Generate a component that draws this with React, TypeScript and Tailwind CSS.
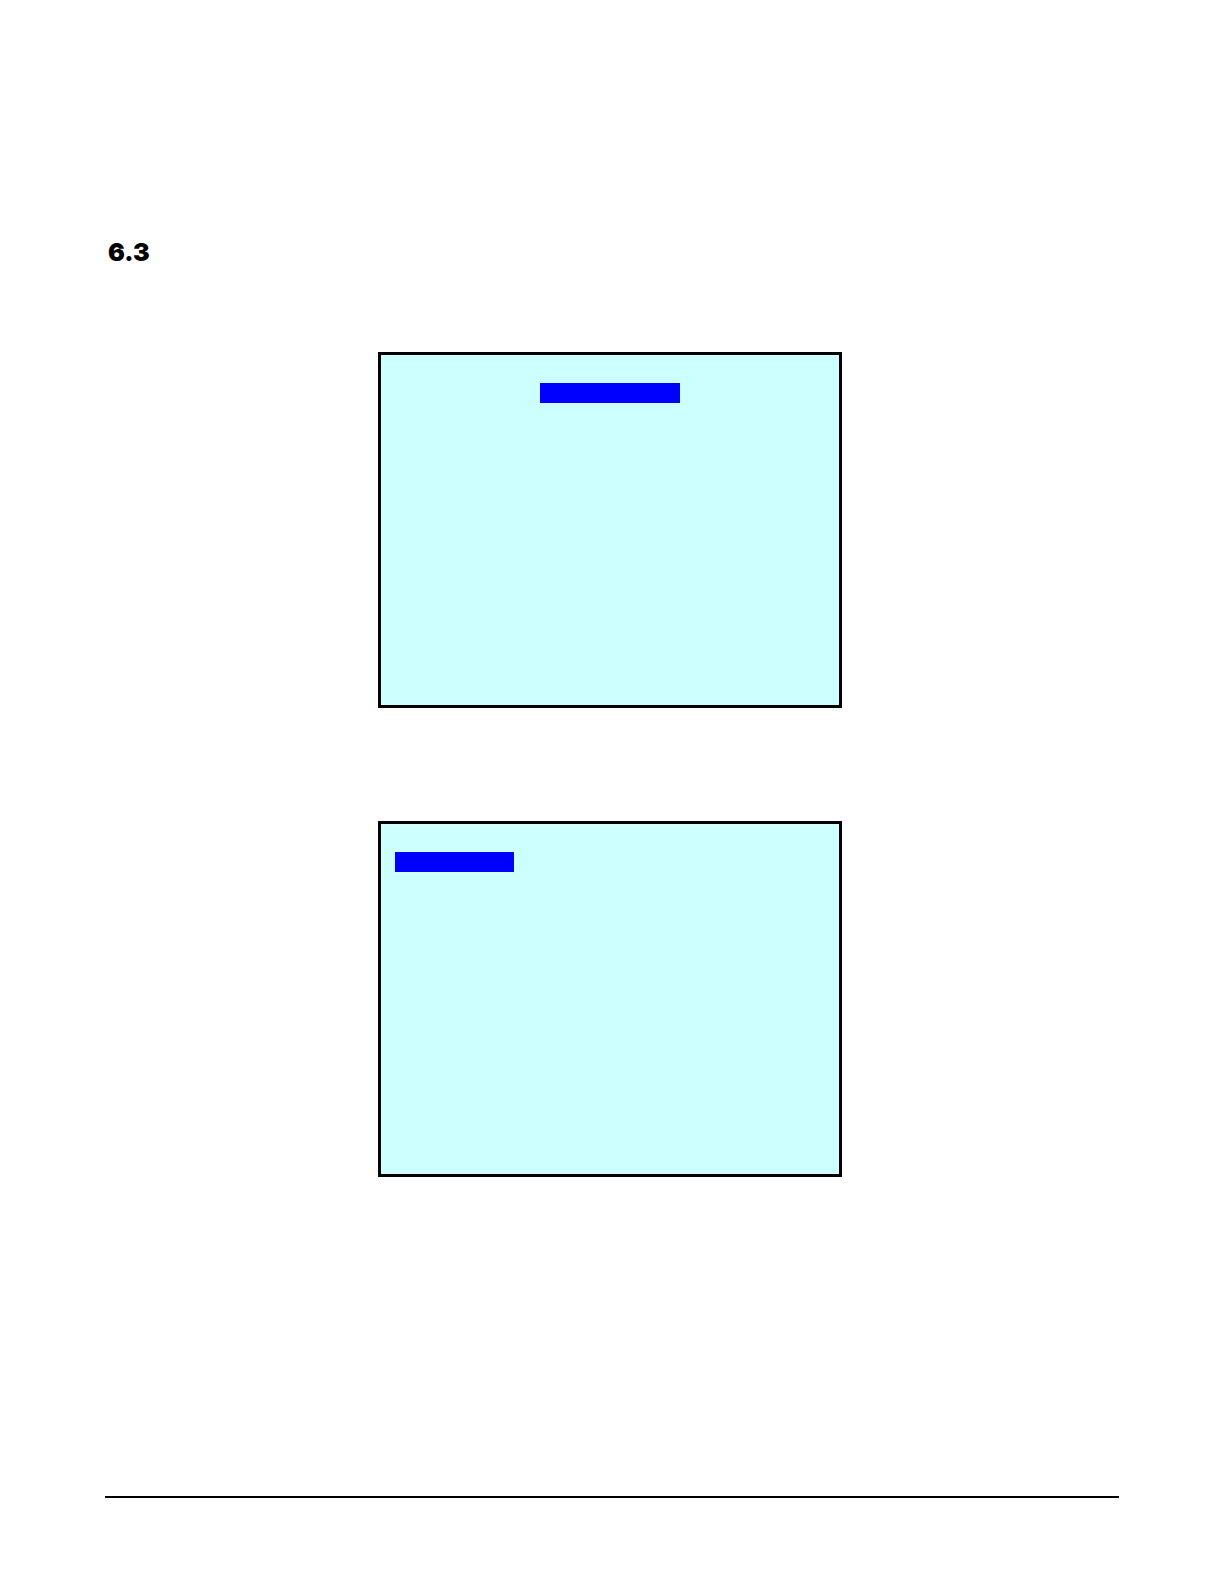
import type { ReactNode } from "react";

function Screen({ label, children }: { label: string; children: ReactNode }) {
  return (
    <section
      aria-label={label}
      className="flex aspect-[464/356] w-full max-w-[464px] flex-col border-3 border-black bg-[#ccffff] px-3.5 py-7"
    >
      {children}
    </section>
  );
}

export default function App() {
  return (
    <div className="flex min-h-screen flex-col bg-white px-[105px] pt-[236px] pb-[86px] text-black">
      <main className="flex flex-col">
        <h1 className="px-[3px] font-['Inter',sans-serif] text-[25px] leading-8 font-black">6.3</h1>
        <div className="mt-[84px] flex flex-col items-center gap-[113px] pr-1">
          <Screen label="Screen with centered highlight">
            <div className="h-5 w-[140px] self-center bg-[#0000ff]" />
          </Screen>
          <Screen label="Screen with left highlight">
            <div className="h-5 w-[119px] self-start bg-[#0000ff]" />
          </Screen>
        </div>
      </main>
      <footer className="mt-auto border-t-2 border-black" />
    </div>
  );
}
